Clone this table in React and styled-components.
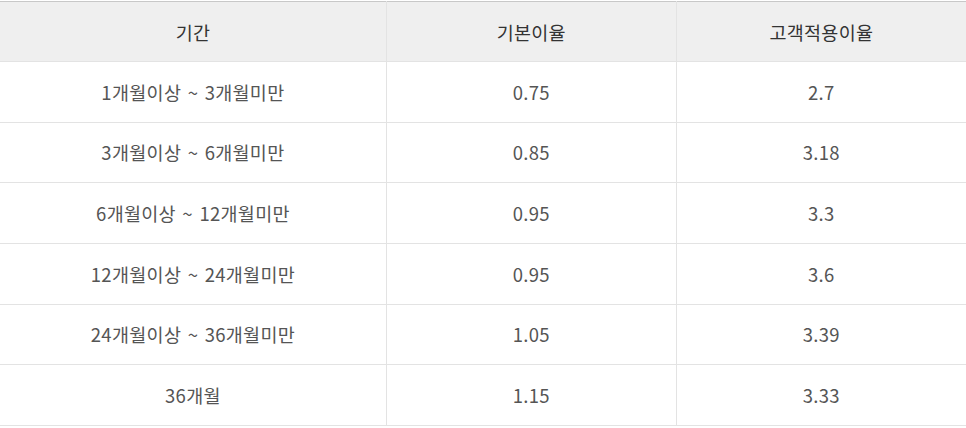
import React from "react";
import styled, { createGlobalStyle } from "styled-components";

const Global = createGlobalStyle`
  html, body { margin: 0; padding: 0; background: #fff; }
  body { font-family: "Noto Sans CJK KR", "Noto Sans", sans-serif; }
`;

const Wrap = styled.div`
  width: 966px;
  padding-top: 1px;
`;

const Table = styled.table`
  width: 966px;
  border-collapse: collapse;
  table-layout: fixed;
  border-top: 1px solid #c8c8c8;
`;

const Cell = `
  padding: 0;
  font-size: 18.5px;
  font-weight: 400;
  letter-spacing: 0.3px;
  word-spacing: 2px;
  text-align: center;
  border-bottom: 1px solid #e3e3e3;
  border-left: 1px solid #e3e3e3;
  &:first-child { border-left: none; }
`;

const Th = styled.th`
  ${Cell}
  height: 59px;
  background: #efefef;
  color: #333;
`;

const Td = styled.td`
  ${Cell}
  height: 59.67px;
  color: #555;
`;

const rows = [
  ["1개월이상 ~ 3개월미만", "0.75", "2.7"],
  ["3개월이상 ~ 6개월미만", "0.85", "3.18"],
  ["6개월이상 ~ 12개월미만", "0.95", "3.3"],
  ["12개월이상 ~ 24개월미만", "0.95", "3.6"],
  ["24개월이상 ~ 36개월미만", "1.05", "3.39"],
  ["36개월", "1.15", "3.33"],
];

export default function App() {
  return (
    <Wrap>
      <Global />
      <Table>
        <colgroup>
          <col style={{ width: "40%" }} />
          <col style={{ width: "30%" }} />
          <col style={{ width: "30%" }} />
        </colgroup>
        <thead>
          <tr>
            <Th>기간</Th>
            <Th>기본이율</Th>
            <Th>고객적용이율</Th>
          </tr>
        </thead>
        <tbody>
          {rows.map((r) => (
            <tr key={r[0]}>
              {r.map((c, i) => (
                <Td key={i}>{c}</Td>
              ))}
            </tr>
          ))}
        </tbody>
      </Table>
    </Wrap>
  );
}
